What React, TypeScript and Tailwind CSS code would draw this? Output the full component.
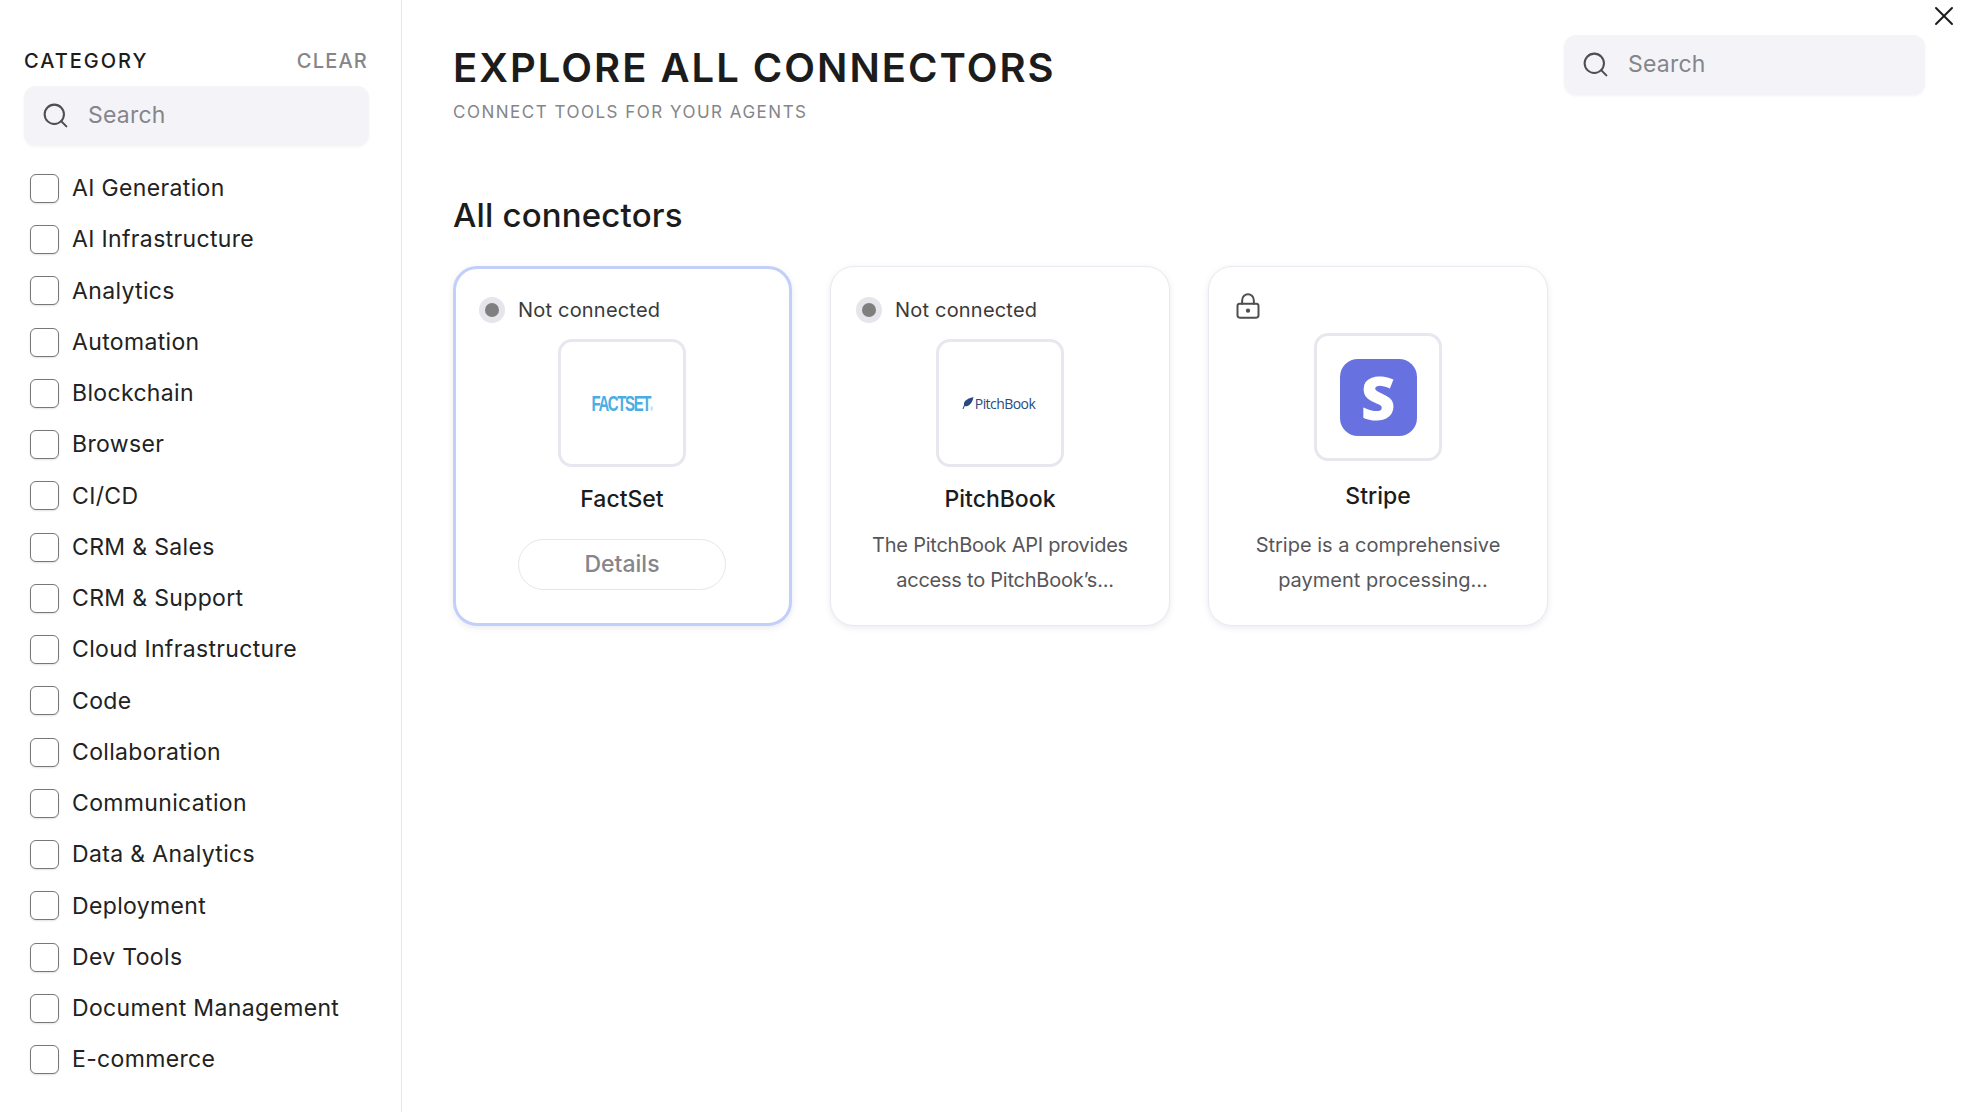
import { LockKeyhole, Search, X } from 'lucide-react'

const categories = [
  'AI Generation',
  'AI Infrastructure',
  'Analytics',
  'Automation',
  'Blockchain',
  'Browser',
  'CI/CD',
  'CRM & Sales',
  'CRM & Support',
  'Cloud Infrastructure',
  'Code',
  'Collaboration',
  'Communication',
  'Data & Analytics',
  'Deployment',
  'Dev Tools',
  'Document Management',
  'E-commerce',
]

const SearchBox = ({ className }: { className: string }) => (
  <div className={`flex h-[60px] items-center rounded-xl bg-[#f4f4f8] pl-[17px] pb-[1px] shadow-[0_1px_3px_rgba(30,30,60,0.05)] ${className}`}>
    <Search size={29} strokeWidth={1.7} className="text-[#4e4e4e]" />
    <span className="ml-[18px] text-[23px] tracking-[0.01em] text-[#85858a]">Search</span>
  </div>
)

const Status = () => (
  <div className="flex h-[26px] items-center gap-[13px]">
    <div className="flex size-[26px] items-center justify-center rounded-full bg-[#e5e5eb]">
      <div className="size-[14px] rounded-full bg-[#7f7f7f]" />
    </div>
    <span className="text-[20px] tracking-[0.01em] text-[#3a3a3a]">Not connected</span>
  </div>
)

const LogoBox = ({ children }: { children: React.ReactNode }) => (
  <div className="mx-auto flex size-[128px] items-center justify-center rounded-[14px] border-[3px] border-[#e6e7ef] bg-white">
    {children}
  </div>
)

const App = () => {
  return (
    <div className="relative flex h-screen overflow-hidden bg-white font-['Inter',sans-serif] text-[#1c1c1c]">
      <aside className="w-[402px] shrink-0 border-r border-[#e6e6ea] px-[24px] pt-[48px]">
        <div className="flex h-[26px] w-[344px] items-center justify-between">
          <span className="text-[20px] font-medium tracking-[0.1em]">CATEGORY</span>
          <span className="text-[20px] font-medium tracking-[0.06em] text-[#85858a]">CLEAR</span>
        </div>
        <SearchBox className="mt-[12px] w-[345px]" />
        <ul className="mt-[28px] flex flex-col gap-[22.24px] pl-[6px]">
          {categories.map(name => (
            <li key={name} className="flex h-[29px] items-center gap-[13px]">
              <div className="size-[29px] rounded-md border border-[#77777c] bg-white shadow-[0_1px_2px_rgba(0,0,0,0.12)]" />
              <span className="text-[23px] tracking-[0.015em] text-[#222]">{name}</span>
            </li>
          ))}
        </ul>
      </aside>

      <main className="flex-1 pl-[51px] pt-[35px]">
        <div className="flex items-start justify-between pr-[45px]">
          <div className="pt-[1px]">
            <h1 className="text-[40px] font-semibold leading-[64px] tracking-[0.05em]">EXPLORE ALL CONNECTORS</h1>
            <p className="text-[17px] leading-[24px] tracking-[1.5px] text-[#85858a]">CONNECT TOOLS FOR YOUR AGENTS</p>
          </div>
          <SearchBox className="w-[361px]" />
        </div>

        <h2 className="mt-[66px] text-[33px] font-medium leading-[50px] tracking-[0.005em]">All connectors</h2>

        <div className="mt-[26px] flex gap-[38px]">
          <div className="h-[360px] w-[339px] rounded-[24px] border-[3px] border-[#c3cffb] bg-white pl-[23px] pr-[24px] pt-[28px] shadow-[0_2px_6px_rgba(60,60,120,0.1)]">
            <Status />
            <div className="mt-[16px]">
              <LogoBox>
                <span className="scale-x-[0.68] font-['Liberation_Sans',sans-serif] text-[22px] font-bold tracking-[-0.09em] text-[#4aaee4]">
                  FACTSET<span className="text-[5px] font-normal tracking-normal">®</span>
                </span>
              </LogoBox>
            </div>
            <div className="mt-[15px] text-center text-[23px] font-medium leading-[34px]">FactSet</div>
            <div className="mx-auto mt-[23px] flex h-[51px] w-[208px] items-center justify-center rounded-full border border-[#e6e6ec] text-[23px] font-medium text-[#85858a]">
              Details
            </div>
          </div>

          <div className="h-[360px] w-[340px] rounded-[24px] border border-[#e9e9f2] bg-white px-[25px] pt-[30px] shadow-[0_2px_6px_rgba(60,60,120,0.1)]">
            <Status />
            <div className="mt-[16px]">
              <LogoBox>
                <div className="mr-[3px] flex items-center gap-[1px] text-[#2a4a7f]">
                  <svg width="12" height="12" viewBox="0 0 12 12" fill="currentColor">
                    <path d="M0.5 12 L2 8 Q1.5 6 3 4 Q6 0.8 11.5 0 Q10.5 5.5 7 8.2 Q5 9.8 2.8 9 L1.5 12 Z" />
                  </svg>
                  <span className="font-['Open_Sans',sans-serif] text-[14px] tracking-[-0.04em]">PitchBook</span>
                </div>
              </LogoBox>
            </div>
            <div className="mt-[15px] text-center text-[23px] font-medium leading-[34px]">PitchBook</div>
            <p className="mt-[12px] text-center text-[20px] leading-[35px] tracking-[-0.012em] text-[#56565a]">
              The PitchBook API provides
              <br />
              <span className="pl-[10px]">access to PitchBook’s...</span>
            </p>
          </div>

          <div className="h-[360px] w-[340px] rounded-[24px] border border-[#e9e9f2] bg-white px-[25px] pt-[25px] shadow-[0_2px_6px_rgba(60,60,120,0.1)]">
            <LockKeyhole size={28} strokeWidth={1.7} className="text-[#4e4e4e]" />
            <div className="mt-[13px]">
              <LogoBox>
                <div className="flex size-[77px] items-center justify-center rounded-[18px] bg-[#6772e0]">
                  <span className="font-['Open_Sans',sans-serif] text-[60px] font-extrabold leading-none text-white">S</span>
                </div>
              </LogoBox>
            </div>
            <div className="mt-[18px] text-center text-[23px] font-medium leading-[34px]">Stripe</div>
            <p className="mt-[15px] text-center text-[20px] leading-[35px] text-[#56565a]">
              Stripe is a comprehensive
              <br />
              <span className="pl-[10px]">payment processing...</span>
            </p>
          </div>
        </div>
      </main>

      <button className="absolute right-[10px] top-0 text-[#1c1c1c]">
        <X size={32} strokeWidth={1.5} />
      </button>
    </div>
  )
}

export default App
